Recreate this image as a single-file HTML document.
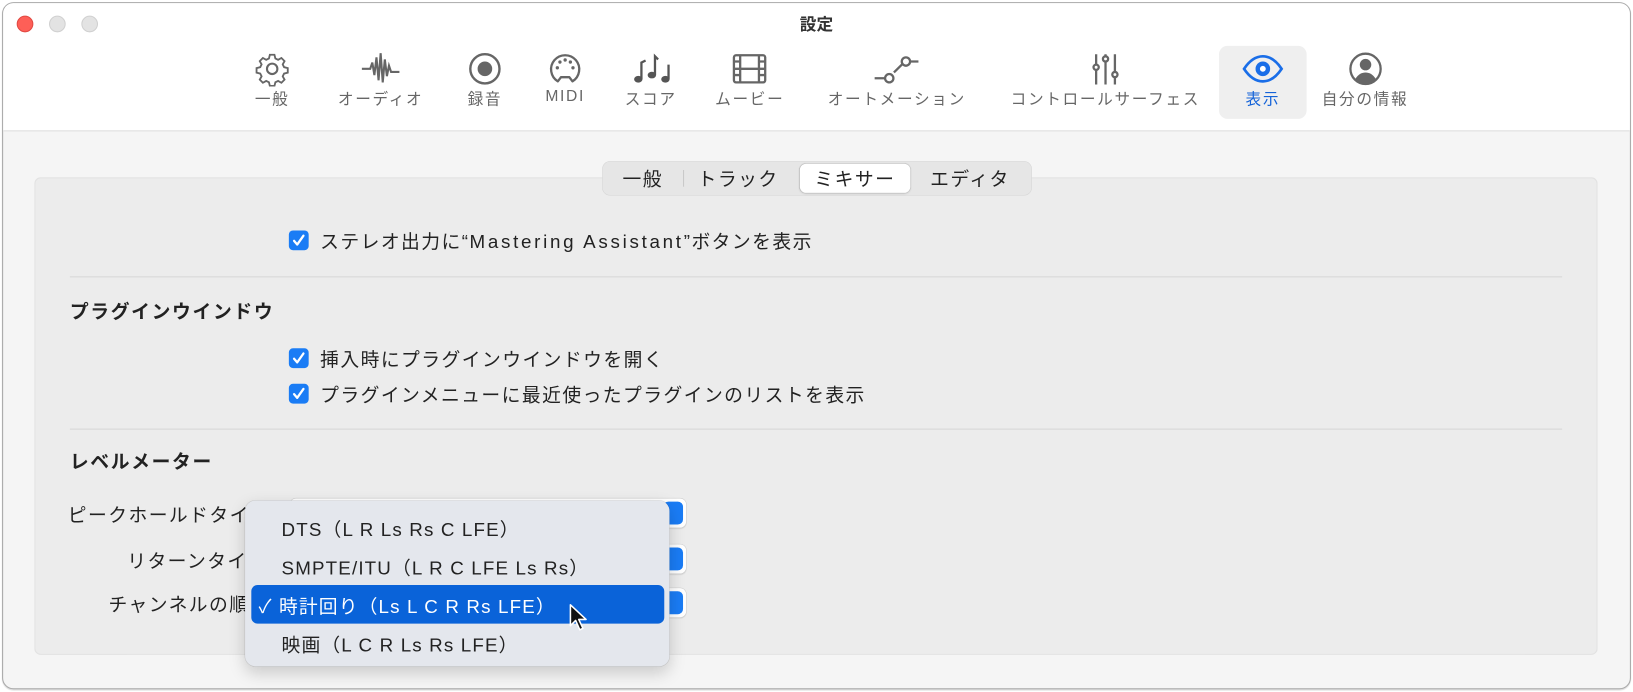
<!DOCTYPE html>
<html><head><meta charset="utf-8">
<style>
html,body{margin:0;padding:0;background:#fff;width:1633px;height:692px;overflow:hidden}
#w{position:absolute;left:0;top:0;width:1566px;height:664px;transform:scale(1.0428);transform-origin:0 0;font-family:"Liberation Sans","Noto Sans CJK JP",sans-serif;color:#222}
.win{position:absolute;left:2px;top:2px;width:1560px;height:657px;border:1px solid #a8a8a8;border-radius:11px;background:#f5f5f5;overflow:hidden;box-shadow:0 1px 1px rgba(0,0,0,.15)}
.tb{position:absolute;left:0;top:0;width:100%;height:122px;background:#fff;border-bottom:1px solid #dcdcdc}
.tl{position:absolute;top:12px;width:14px;height:14px;border-radius:50%;background:#e3e3e3;border:.5px solid #d0d0d0}
.title{position:absolute;top:7px;left:0;width:100%;text-align:center;font-weight:bold;font-size:16px;color:#333}
.it{position:absolute;top:44px;height:70px;text-align:center;transform:translateX(-50%);font-size:15px;letter-spacing:1.6px;color:#666;white-space:nowrap}
.it svg{display:block;margin:5px auto 1px;height:34px}
.a{position:absolute;white-space:nowrap}
.cb{position:absolute;width:19px;height:19px;border-radius:4px;background:#1a7cf5}
.cb svg{position:absolute;left:3px;top:3px}
.t17{font-size:18px;letter-spacing:1.4px;color:#222}
.sep{position:absolute;left:65px;width:1431px;height:1px;background:#d6d6d6}
.h{font-weight:bold;font-size:18px;letter-spacing:1.6px;color:#222}
.pop{position:absolute;left:278px;width:380px;height:28px;background:#fff;border-radius:6px;box-shadow:0 0 0 .5px #ccc,0 1px 1px rgba(0,0,0,.1)}
.pop i{position:absolute;right:3px;top:3px;width:19px;height:22px;border-radius:5px;background:#1a7cf5}
.mi{position:absolute;left:270px;font-size:18px;letter-spacing:1.1px;color:#222}
</style></head><body><div id="w">
<div class="win">
 <div class="tb">
  <div class="tl" style="left:13px;background:#fe5f57;border-color:#e14942"></div>
  <div class="tl" style="left:44px"></div>
  <div class="tl" style="left:75px"></div>
  <div class="title">設定</div>
  <div style="position:absolute;left:1166px;top:41px;width:84px;height:70px;border-radius:8px;background:#efefef"></div>
 </div>
</div>
<div class="it" style="left:261px"><svg width="34" height="34" viewBox="0 0 34 34" fill="none" stroke="#666" stroke-width="2"><path d="M14.5 4h5l1 4 3 1.5 3.6-2 3.4 3.4-2 3.6 1.5 3 4 1v5l-4 1-1.5 3 2 3.6-3.4 3.4-3.6-2-3 1.5-1 4h-5l-1-4-3-1.5-3.6 2-3.4-3.4 2-3.6-1.5-3-4-1v-5l4-1 1.5-3-2-3.6 3.4-3.4 3.6 2 3-1.5z" transform="scale(.88) translate(2.3 0)"/><circle cx="17" cy="17" r="5"/></svg>一般</div>
<div class="it" style="left:365px"><svg width="40" height="34" viewBox="0 0 40 34" fill="none" stroke="#666" stroke-width="2"><path d="M2 17h8l2-6 2 12 2-17 2 22 2-26 2 28 2-22 2 16 2-10 2 6h8"/></svg>オーディオ</div>
<div class="it" style="left:465px"><svg width="34" height="34" viewBox="0 0 34 34"><circle cx="17" cy="17" r="14" fill="none" stroke="#666" stroke-width="2.3"/><circle cx="17" cy="17" r="7" fill="#666"/></svg>録音</div>
<div class="it" style="left:542px"><svg width="34" height="34" viewBox="0 0 34 34"><path d="M10 29 A13.5 13.5 0 1 1 24 29 L21 25 H13 Z" fill="none" stroke="#666" stroke-width="2.2" stroke-linejoin="round"/><g fill="#666"><circle cx="9.5" cy="16" r="1.6"/><circle cx="24.5" cy="16" r="1.6"/><circle cx="12" cy="10.5" r="1.6"/><circle cx="22" cy="10.5" r="1.6"/><circle cx="17" cy="8.5" r="1.6"/></g></svg>MIDI</div>
<div class="it" style="left:624px"><svg width="40" height="34" viewBox="0 0 40 34" fill="#555"><ellipse cx="8" cy="27" rx="4" ry="3.2"/><ellipse cx="21" cy="23" rx="4" ry="3.2"/><ellipse cx="34" cy="27" rx="4" ry="3.2"/><path d="M11 27V11l4-2M24 23V5l3 3M37 27V13" stroke="#555" stroke-width="2.2" fill="none"/></svg>スコア</div>
<div class="it" style="left:719px"><svg width="36" height="34" viewBox="0 0 36 34" fill="none" stroke="#666" stroke-width="2.2"><rect x="3" y="4" width="30" height="26" rx="2"/><path d="M9 4v26M27 4v26M9 17h18M3 10h6M3 17h6M3 23h6M27 10h6M27 17h6M27 23h6"/></svg>ムービー</div>
<div class="it" style="left:860px"><svg width="50" height="34" viewBox="0 0 50 34" fill="none" stroke="#666" stroke-width="2.2"><path d="M4 26h9M22.5 20.5l8-8M38 10h8"/><circle cx="18" cy="26" r="4"/><circle cx="34" cy="10" r="4"/></svg>オートメーション</div>
<div class="it" style="left:1060px"><svg width="34" height="34" viewBox="0 0 34 34" fill="none" stroke="#666" stroke-width="2.2"><path d="M8 3v10M8 18v14M17 3v2M17 10v22M26 3v17M26 25v7"/><circle cx="8" cy="15.5" r="2.5"/><circle cx="17" cy="7.5" r="2.5"/><circle cx="26" cy="22.5" r="2.5"/></svg>コントロールサーフェス</div>
<div class="it" style="left:1211px;color:#1463d8"><svg width="42" height="34" viewBox="0 0 42 34"><path d="M3 17C9 8 15 5 21 5s12 3 18 12c-6 9-12 12-18 12S9 26 3 17z" fill="none" stroke="#1a6ee8" stroke-width="2.6"/><circle cx="21" cy="17" r="7" fill="#1a6ee8"/><circle cx="21" cy="17" r="2.8" fill="#fff"/></svg>表示</div>
<div class="it" style="left:1309px"><svg width="34" height="34" viewBox="0 0 34 34"><circle cx="17" cy="17" r="14.5" fill="none" stroke="#666" stroke-width="2.2"/><circle cx="17" cy="13" r="5.5" fill="#666"/><path d="M7 27c3-5 6.5-6.5 10-6.5s7 1.5 10 6.5c-3 3-6.5 4-10 4s-7-1-10-4z" fill="#666"/></svg>自分の情報</div>

<div style="position:absolute;left:33px;top:170px;width:1499px;height:458px;background:#ececec;border-radius:6px;box-shadow:inset 0 0 0 1px #e2e2e2"></div>
<div style="position:absolute;left:578px;top:155px;width:411px;height:32px;border-radius:7px;background:#e6e6e6;box-shadow:0 0 0 .5px #d4d4d4"></div>
<div style="position:absolute;left:655px;top:163px;width:1px;height:16px;background:#c8c8c8"></div>
<div style="position:absolute;left:767px;top:157px;width:106px;height:28px;border-radius:6px;background:#fff;box-shadow:0 0 1px rgba(0,0,0,.3),0 1px 2px rgba(0,0,0,.1)"></div>
<div class="a t17" style="left:597px;top:158px">一般</div>
<div class="a t17" style="left:669px;top:158px">トラック</div>
<div class="a t17" style="left:781px;top:158px">ミキサー</div>
<div class="a t17" style="left:892px;top:158px">エディタ</div>

<div class="cb" style="left:277px;top:221px"><svg width="13" height="13" viewBox="0 0 13 13"><path d="M2 7l3 3.5L11 2" fill="none" stroke="#fff" stroke-width="2.2" stroke-linecap="round" stroke-linejoin="round"/></svg></div>
<div class="a t17" style="left:307px;top:218px">ステレオ出力に“<span style="letter-spacing:2.6px">Mastering Assistant</span>”ボタンを表示</div>
<div class="sep" style="top:265px;left:67px"></div>
<div class="a h" style="left:67px;top:285px">プラグインウインドウ</div>
<div class="cb" style="left:277px;top:334px"><svg width="13" height="13" viewBox="0 0 13 13"><path d="M2 7l3 3.5L11 2" fill="none" stroke="#fff" stroke-width="2.2" stroke-linecap="round" stroke-linejoin="round"/></svg></div>
<div class="a t17" style="left:307px;top:331px">挿入時にプラグインウインドウを開く</div>
<div class="cb" style="left:277px;top:368px"><svg width="13" height="13" viewBox="0 0 13 13"><path d="M2 7l3 3.5L11 2" fill="none" stroke="#fff" stroke-width="2.2" stroke-linecap="round" stroke-linejoin="round"/></svg></div>
<div class="a t17" style="left:307px;top:365px">プラグインメニューに最近使ったプラグインのリストを表示</div>
<div class="sep" style="top:411px;left:67px"></div>
<div class="a h" style="left:67px;top:429px">レベルメーター</div>

<div class="a t17" style="left:65px;top:480px">ピークホールドタイム</div>
<div class="a t17" style="left:122px;top:524px">リターンタイム</div>
<div class="a t17" style="left:104px;top:566px">チャンネルの順序</div>
<div class="pop" style="top:478px"><i></i></div>
<div class="pop" style="top:522px"><i></i></div>
<div class="pop" style="top:564px"><i></i></div>

<div style="position:absolute;left:235px;top:480px;width:407px;height:159px;border-radius:10px;background:#e4e7ed;box-shadow:0 0 0 .5px rgba(0,0,0,.12),0 6px 16px rgba(0,0,0,.18)"></div>
<div class="mi a" style="top:494px">DTS（L R Ls Rs C LFE）</div>
<div class="mi a" style="top:531px">SMPTE/ITU（L R C LFE Ls Rs）</div>
<div style="position:absolute;left:241px;top:561px;width:396px;height:37px;border-radius:6px;background:#0a63d9"></div>
<div class="mi a" style="top:568px;left:248px;color:#fff">✓ 時計回り（Ls L C R Rs LFE）</div>
<div class="mi a" style="top:605px">映画（L C R Ls Rs LFE）</div>
<svg style="position:absolute;left:545px;top:578px" width="20" height="28" viewBox="0 0 20 28"><path d="M2 2v20l5-5 4 9 3-1.5-4-8.5h7z" fill="#111" stroke="#fff" stroke-width="1.5" stroke-linejoin="round"/></svg>
</div></body></html>
